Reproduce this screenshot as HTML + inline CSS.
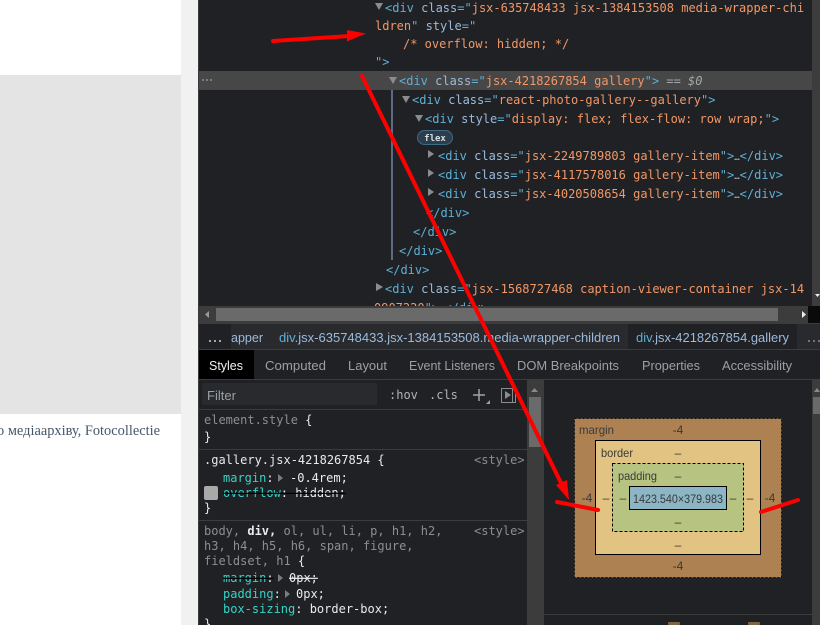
<!DOCTYPE html>
<html><head><meta charset="utf-8"><style>
html,body{margin:0;padding:0;background:#fff;width:820px;height:625px;overflow:hidden}
svg{display:block;position:absolute;left:0;top:0}
.m{font-family:"DejaVu Sans Mono","Liberation Mono",monospace;font-size:12px;white-space:pre}
.u{font-family:"Liberation Sans",sans-serif;font-size:13px}
.t{fill:#5db0d7}.a{fill:#9bbbdc}.v{fill:#f29766}
.g{fill:#8b8e92}.w{fill:#e8eaed}.c{fill:#35d4c7}.tab{fill:#9aa0a6}
.b{font-family:"Liberation Sans",sans-serif;font-size:12px;fill:#3a3a3a}
</style></head><body>
<svg width="820" height="625" viewBox="0 0 820 625" xmlns="http://www.w3.org/2000/svg">
<!-- left page -->
<rect width="820" height="625" fill="#fff"/>
<rect x="0" y="75" width="181" height="339" fill="#e4e4e4"/>
<rect x="181" y="0" width="17" height="625" fill="#f1f1f1"/>
<text x="160" y="435" text-anchor="end" font-family="'Liberation Serif',serif" font-size="14.400" fill="#45586a">о медіаархіву, Fotocollectie</text>
<!-- devtools -->
<rect x="198" y="0" width="622" height="625" fill="#202124"/>
<rect x="198" y="0" width="1" height="625" fill="#3c3c3c"/>
<rect x="199" y="71" width="613" height="19" fill="#474747"/>
<rect x="812" y="0" width="8" height="306" fill="#3c3c3c"/>
<rect x="391" y="90" width="2" height="170" fill="#5c6b85"/>
<g fill="#8a8c90">
<path d="M375 3h8l-4 7z"/><path d="M389 77h8l-4 7z"/><path d="M402 96h8l-4 7z"/><path d="M415 115h8l-4 7z"/>
<path d="M428 150l6 4-6 4z" transform="translate(0,0)"/><path d="M428 169l6 4-6 4z"/><path d="M428 188l6 4-6 4z"/>
<path d="M376 283l7 4-7 4z"/>
</g>
<circle cx="203" cy="80" r="1" fill="#8a8c90"/><circle cx="207" cy="80" r="1" fill="#8a8c90"/><circle cx="211" cy="80" r="1" fill="#8a8c90"/>
<g class="m">
<text x="385" y="12"><tspan class="t">&lt;div</tspan><tspan class="a"> class</tspan><tspan class="t">="</tspan><tspan class="v">jsx-635748433 jsx-1384153508 media-wrapper-chi</tspan></text>
<text x="375" y="30"><tspan class="v">ldren</tspan><tspan class="t">"</tspan><tspan class="a"> style</tspan><tspan class="t">="</tspan></text>
<text x="403" y="48" class="v">/* overflow: hidden; */</text>
<text x="375" y="66" class="t">"&gt;</text>
<text x="399" y="85"><tspan class="t">&lt;div</tspan><tspan class="a"> class</tspan><tspan class="t">="</tspan><tspan class="v">jsx-4218267854 gallery</tspan><tspan class="t">"&gt;</tspan><tspan fill="#a5a7aa"> == </tspan><tspan fill="#a5a7aa" font-style="italic">$0</tspan></text>
<text x="412" y="104"><tspan class="t">&lt;div</tspan><tspan class="a"> class</tspan><tspan class="t">="</tspan><tspan class="v">react-photo-gallery--gallery</tspan><tspan class="t">"&gt;</tspan></text>
<text x="425" y="123"><tspan class="t">&lt;div</tspan><tspan class="a"> style</tspan><tspan class="t">="</tspan><tspan class="v">display: flex; flex-flow: row wrap;</tspan><tspan class="t">"&gt;</tspan></text>
<text x="438" y="160"><tspan class="t">&lt;div</tspan><tspan class="a"> class</tspan><tspan class="t">="</tspan><tspan class="v">jsx-2249789803 gallery-item</tspan><tspan class="t">"&gt;</tspan><tspan fill="#ccc" font-size="9">…</tspan><tspan class="t">&lt;/div&gt;</tspan></text>
<text x="438" y="179"><tspan class="t">&lt;div</tspan><tspan class="a"> class</tspan><tspan class="t">="</tspan><tspan class="v">jsx-4117578016 gallery-item</tspan><tspan class="t">"&gt;</tspan><tspan fill="#ccc" font-size="9">…</tspan><tspan class="t">&lt;/div&gt;</tspan></text>
<text x="438" y="198"><tspan class="t">&lt;div</tspan><tspan class="a"> class</tspan><tspan class="t">="</tspan><tspan class="v">jsx-4020508654 gallery-item</tspan><tspan class="t">"&gt;</tspan><tspan fill="#ccc" font-size="9">…</tspan><tspan class="t">&lt;/div&gt;</tspan></text>
<text x="426" y="217" class="t">&lt;/div&gt;</text>
<text x="413" y="236" class="t">&lt;/div&gt;</text>
<text x="399" y="255" class="t">&lt;/div&gt;</text>
<text x="386" y="274" class="t">&lt;/div&gt;</text>
<text x="385" y="293"><tspan class="t">&lt;div</tspan><tspan class="a"> class</tspan><tspan class="t">="</tspan><tspan class="v">jsx-1568727468 caption-viewer-container jsx-14</tspan></text>
<text x="374" y="312"><tspan class="v">0907220</tspan><tspan class="t">"&gt;</tspan><tspan fill="#ccc" font-size="9">…</tspan><tspan class="t">&lt;/div&gt;</tspan></text>
</g>
<!-- flex pill -->
<rect x="417.500" y="130.500" width="35" height="14" rx="7" fill="#2c3e4e" stroke="#3f6b86"/>
<text x="435" y="141" text-anchor="middle" font-family="'DejaVu Sans Mono',monospace" font-size="9" font-weight="bold" fill="#d5dde3">flex</text>
<!-- h scrollbar -->
<rect x="198" y="306" width="614" height="17" fill="#3c3c3c"/>
<rect x="216" y="308" width="562" height="13" fill="#6a6a6a"/>
<path d="M209 311v7l-4-3.500z" fill="#9a9a9a"/>
<path d="M802 311v7l4-3.500z" fill="#f0f0f0"/>
<rect x="808" y="306" width="12" height="17" fill="#0a0a0a"/>
<path d="M815 294h5l-2.500 3z" fill="#eee"/>
<!-- breadcrumb -->
<rect x="199" y="323" width="621" height="26" fill="#292a2d"/>
<rect x="628" y="323" width="169" height="26" fill="#202124"/>
<rect x="199" y="323" width="32" height="26" fill="#202124"/>
<rect x="198" y="323" width="622" height="1" fill="#3c3c3c"/>
<rect x="198" y="349" width="622" height="1" fill="#3c3c3c"/>
<g fill="#a5a7aa"><rect x="209" y="340" width="2" height="2"/><rect x="214" y="340" width="2" height="2"/><rect x="219" y="340" width="2" height="2"/><rect x="808" y="340" width="2" height="2" opacity=".6"/><rect x="813" y="340" width="2" height="2" opacity=".6"/><rect x="818" y="340" width="2" height="2" opacity=".6"/></g>
<g class="u">
<text x="231" y="342" textLength="32" lengthAdjust="spacingAndGlyphs" fill="#9bbbdc">apper</text>
<text x="279" y="342" textLength="341" lengthAdjust="spacingAndGlyphs" fill="#9bbbdc"><tspan fill="#5db0d7">div</tspan>.jsx-635748433.jsx-1384153508.media-wrapper-children</text>
<text x="636" y="342" textLength="153" lengthAdjust="spacingAndGlyphs" fill="#9bbbdc"><tspan fill="#5db0d7">div</tspan>.jsx-4218267854.gallery</text>
</g>
<!-- tabs -->
<rect x="199" y="350" width="55" height="29" fill="#000"/>
<rect x="198" y="379" width="622" height="1" fill="#3c3c3c"/>
<g class="u">
<text x="209" y="370" textLength="34" lengthAdjust="spacingAndGlyphs" fill="#f1f1f1">Styles</text>
<text class="tab" x="265" y="370" textLength="61" lengthAdjust="spacingAndGlyphs">Computed</text>
<text class="tab" x="348" y="370" textLength="39" lengthAdjust="spacingAndGlyphs">Layout</text>
<text class="tab" x="409" y="370" textLength="86" lengthAdjust="spacingAndGlyphs">Event Listeners</text>
<text class="tab" x="517" y="370" textLength="102" lengthAdjust="spacingAndGlyphs">DOM Breakpoints</text>
<text class="tab" x="642" y="370" textLength="58" lengthAdjust="spacingAndGlyphs">Properties</text>
<text class="tab" x="722" y="370" textLength="70" lengthAdjust="spacingAndGlyphs">Accessibility</text>
</g>
<!-- filter toolbar -->
<rect x="202" y="383" width="175" height="22" fill="#292a2d"/>
<text class="u tab" x="207" y="400" textLength="29" lengthAdjust="spacingAndGlyphs">Filter</text>
<g class="m">
<text x="389" y="399" fill="#b0b3b7">:hov</text>
<text x="429" y="399" fill="#b0b3b7">.cls</text>
</g>
<path d="M479 389v12M473 395h12" stroke="#a0a2a5" stroke-width="1.500" fill="none"/>
<path d="M490 400v4h-4z" fill="#a0a2a5"/>
<rect x="501.500" y="388.500" width="14" height="14" fill="none" stroke="#8a8c90"/>
<path d="M505 391v8l6-4z" fill="#8a8c90"/><path d="M512.500 389v13" stroke="#8a8c90"/>
<rect x="198" y="409" width="329" height="1" fill="#3c3c3c"/>
<rect x="543" y="379" width="1" height="246" fill="#3c3c3c"/>
<!-- styles scrollbar -->
<rect x="527" y="380" width="16" height="245" fill="#3c3c3c"/>
<rect x="529" y="397" width="12" height="50" fill="#6a6a6a"/>
<path d="M531 392h7l-3.500-4z" fill="#8a8a8a"/>
<rect x="812" y="380" width="8" height="245" fill="#3c3c3c"/>
<rect x="813" y="397" width="7" height="17" fill="#6a6a6a"/>
<path d="M814 392h6l-3-4z" fill="#8a8a8a"/>
<!-- style rules -->
<rect x="198" y="449" width="329" height="1" fill="#3c3c3c"/>
<rect x="198" y="520" width="329" height="1" fill="#3c3c3c"/>
<g class="m">
<text x="204" y="424"><tspan class="g">element.style </tspan><tspan class="w">{</tspan></text>
<text x="204" y="441" class="w">}</text>
<text x="204" y="464" class="w">.gallery.jsx-4218267854 {</text>
<text x="474" y="464" class="g">&lt;style&gt;</text>
<text x="223" y="482"><tspan class="c">margin</tspan><tspan class="w">:</tspan></text>
<text x="290" y="482" class="w">-0.4rem;</text>
<text x="223" y="497" text-decoration="line-through"><tspan class="c">overflow</tspan><tspan class="w">: hidden;</tspan></text>
<text x="204" y="512" class="w">}</text>
<text x="204" y="535"><tspan class="g">body, </tspan><tspan class="w" font-weight="bold">div,</tspan><tspan class="g"> ol, ul, li, p, h1, h2,</tspan></text>
<text x="474" y="535" class="g">&lt;style&gt;</text>
<text x="204" y="550" class="g">h3, h4, h5, h6, span, figure,</text>
<text x="204" y="565"><tspan class="g">fieldset, h1 </tspan><tspan class="w">{</tspan></text>
<text x="223" y="582" text-decoration="line-through"><tspan class="c">margin</tspan><tspan class="w">:  </tspan></text>
<text x="289" y="582" class="w" text-decoration="line-through">0px;</text>
<text x="223" y="598"><tspan class="c">padding</tspan><tspan class="w">:</tspan></text>
<text x="296" y="598" class="w">0px;</text>
<text x="223" y="613"><tspan class="c">box-sizing</tspan><tspan class="w">: border-box;</tspan></text>
<text x="204" y="628" class="w">}</text>
</g>
<path d="M278 474l5 4-5 4z M278 574l5 4-5 4z M285 590l5 4-5 4z" fill="#7a7c80"/>
<rect x="204" y="486" width="14" height="14" rx="2" fill="#a9a9a9"/>
<!-- box model -->
<rect x="574.500" y="418.500" width="207" height="159" fill="#ae8152" stroke="#111" stroke-dasharray="2 2"/>
<rect x="595.500" y="440.500" width="165" height="114" fill="#e3c381" stroke="#000"/>
<rect x="612.500" y="463.500" width="131" height="68" fill="#b7c381" stroke="#000" stroke-dasharray="3 2"/>
<rect x="629.500" y="486.500" width="97" height="23" fill="#8cb6c5" stroke="#000"/>
<g class="b">
<text x="579" y="434" textLength="35" lengthAdjust="spacingAndGlyphs">margin</text>
<text x="678" y="434" text-anchor="middle">-4</text>
<text x="601" y="457" textLength="32" lengthAdjust="spacingAndGlyphs">border</text>
<text x="678" y="457" text-anchor="middle">–</text>
<text x="618" y="480" textLength="39" lengthAdjust="spacingAndGlyphs">padding</text>
<text x="678" y="480" text-anchor="middle">–</text>
<text x="633" y="503" textLength="90" lengthAdjust="spacingAndGlyphs">1423.540×379.983</text>
<text x="587" y="502" text-anchor="middle">-4</text>
<text x="606" y="502" text-anchor="middle">–</text>
<text x="623" y="502" text-anchor="middle">–</text>
<text x="733" y="502" text-anchor="middle">–</text>
<text x="750" y="502" text-anchor="middle">–</text>
<text x="770" y="502" text-anchor="middle">-4</text>
<text x="678" y="526" text-anchor="middle">–</text>
<text x="678" y="549" text-anchor="middle">–</text>
<text x="678" y="570" text-anchor="middle">-4</text>
</g>
<rect x="544" y="614" width="268" height="1" fill="#3c3c3c"/>
<rect x="668" y="622" width="12" height="3" rx="1" fill="#7d6544"/>
<rect x="748" y="622" width="12" height="3" rx="1" fill="#7d6544"/>
<!-- red annotations -->
<g stroke="#fe0000" fill="none" stroke-linecap="round">
<path d="M273 41L350 36" stroke-width="4"/>
<path d="M362 76L563 487" stroke-width="4"/>
<path d="M557 502L598 510" stroke-width="4"/>
<path d="M761 512L798 500" stroke-width="4"/>
</g>
<path d="M347 30L366 33.500L347 41.500Z" fill="#fe0000"/>
<path d="M556 485L567 480L569 500Z" fill="#fe0000"/>
</svg>
</body></html>
